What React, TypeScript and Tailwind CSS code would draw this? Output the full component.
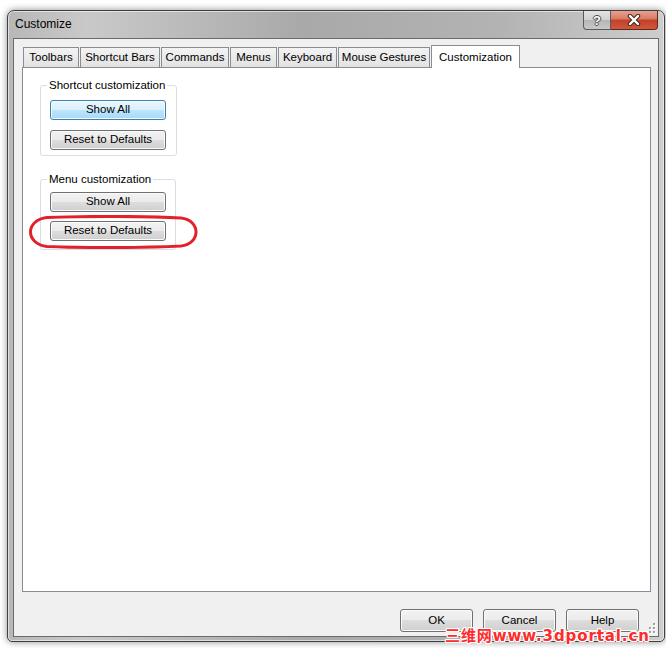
import React from "react";

const font = { fontFamily: '"Liberation Sans", Arial, sans-serif' };

const tabs = [
  { label: "Toolbars", w: "w-[56px]" },
  { label: "Shortcut Bars", w: "w-[80px]" },
  { label: "Commands", w: "w-[68px]" },
  { label: "Menus", w: "w-[47px]" },
  { label: "Keyboard", w: "w-[59px]" },
  { label: "Mouse Gestures", w: "w-[92px]" },
];

// classic Win7 push button
const Btn = ({
  label,
  size,
  hot = false,
}: {
  label: string;
  size: string;
  hot?: boolean;
}) => (
  <div
    className={
      size +
      " flex items-center justify-center rounded-[3px] border text-[11.5px] text-black " +
      (hot
        ? "border-[#3c7fb1] bg-[linear-gradient(#eaf6fd_0%,#d9f0fc_50%,#bee6fd_50%,#a7d9f5_100%)] shadow-[inset_0_0_0_1px_#f4fbff]"
        : "border-[#707070] bg-[linear-gradient(#f2f2f2_0%,#ebebeb_50%,#dddddd_50%,#cfcfcf_100%)] shadow-[inset_0_0_0_1px_#fbfbfb]")
    }
  >
    {label}
  </div>
);

const App = () => {
  return (
    <div
      className="relative w-[666px] h-[648px] overflow-hidden bg-white pt-[10px] pl-[7px]"
      style={font}
    >
      {/* Window frame */}
      <div className="flex flex-col w-[658px] h-[632px] rounded-t-[7px] rounded-b-[5px] border border-[#3f3f3f] bg-[linear-gradient(90deg,#b7b7b7_0%,#c9c9c9_12%,#a9a9a9_45%,#b3b3b3_75%,#cdcdcd_100%)] shadow-[0_0_7px_rgba(0,0,0,0.45),inset_0_0_0_1px_rgba(255,255,255,0.55)] px-[5px] pb-[4px]">
        {/* Title bar */}
        <div className="flex h-[27px] shrink-0">
          <div className="self-center pl-[2px] pb-[1px] text-[12px] text-black">
            Customize
          </div>
          <div className="ml-auto mr-[1px] flex self-start">
            <div className="flex w-[28px] h-[19px] items-center justify-center rounded-bl-[4px] border border-t-0 border-[#5a5a5a] bg-[linear-gradient(#e4e4e4_0%,#d0d0d0_50%,#b5b5b5_50%,#c9c9c9_100%)]">
              <span className="text-[13px] font-bold leading-none text-white [text-shadow:1px_0_0_#4a4a4a,-1px_0_0_#4a4a4a,0_1px_0_#4a4a4a,0_-1px_0_#4a4a4a]">
                ?
              </span>
            </div>
            <div className="flex w-[47px] h-[19px] items-center justify-center rounded-br-[4px] border border-t-0 border-l-0 border-[#5a2a20] bg-[linear-gradient(#e7a190_0%,#d77a62_45%,#c2402a_50%,#d2583a_100%)]">
              <svg width="14" height="12" viewBox="0 0 14 12">
                <path d="M3 2 L11 10 M11 2 L3 10" stroke="#4a2a22" strokeWidth="4.5" strokeLinecap="round" />
                <path d="M3 2 L11 10 M11 2 L3 10" stroke="#ffffff" strokeWidth="2.4" strokeLinecap="round" />
              </svg>
            </div>
          </div>
        </div>

        {/* Client area */}
        <div className="relative flex flex-1 flex-col border border-[#6b6b6b] bg-[#f0f0f0] pl-[8px] pr-[7px]">
          {/* Tab strip */}
          <div className="mt-[6px] flex h-[22px] items-end gap-px pl-[1px]">
            {tabs.map((t) => (
              <div
                key={t.label}
                className={
                  t.w +
                  " flex h-[20px] items-center justify-center whitespace-nowrap border border-b-0 border-[#898c95] bg-[linear-gradient(#f3f3f3,#e2e2e2)] text-[11.5px] text-black"
                }
              >
                {t.label}
              </div>
            ))}
            <div className="relative z-10 -mb-px flex h-[23px] w-[89px] items-start justify-center border border-b-0 border-[#898c95] bg-white pt-[3px] text-[11.5px] text-black">
              Customization
            </div>
          </div>

          {/* Tab panel */}
          <div className="relative h-[525px] border border-[#898c95] bg-white pl-[17px]">
            <fieldset className="mt-[10px] w-[135px] rounded-[3px] border border-[#d5dfe5] px-[9px] pt-[7px] pb-[5px]">
              <legend className="-ml-[3px] whitespace-nowrap px-[2px] text-[11.5px] leading-[15px] text-black">
                Shortcut customization
              </legend>
              <div className="flex flex-col gap-[10px]">
                <Btn label="Show All" size="w-[116px] h-[20px]" hot />
                <Btn label="Reset to Defaults" size="w-[116px] h-[20px]" />
              </div>
            </fieldset>

            <fieldset className="mt-[16px] w-[135px] rounded-[3px] border border-[#d5dfe5] px-[9px] pt-[5px] pb-[8px]">
              <legend className="-ml-[3px] whitespace-nowrap px-[2px] text-[11.5px] leading-[15px] text-black">
                Menu customization
              </legend>
              <div className="flex flex-col gap-[9px]">
                <Btn label="Show All" size="w-[116px] h-[20px]" />
                <Btn label="Reset to Defaults" size="w-[116px] h-[20px]" />
              </div>
            </fieldset>

            {/* red marker drawn on the screenshot */}
            <svg
              className="absolute left-0 top-[147px]"
              width="178"
              height="34"
              viewBox="0 0 178 34"
            >
              <path
                d="M24 2.5 C 62 1, 126 1, 158 3 C 178 5, 178 29, 158 31 C 121 33, 62 33, 24 31.5 C 2 29, 2 5, 24 2.5 Z"
                fill="none"
                stroke="#e3212b"
                strokeWidth="3"
              />
            </svg>
          </div>

          {/* Dialog buttons */}
          <div className="mt-[17px] flex justify-end gap-[10px] pr-[12px]">
            <Btn label="OK" size="w-[73px] h-[23px]" />
            <Btn label="Cancel" size="w-[73px] h-[23px]" />
            <Btn label="Help" size="w-[73px] h-[23px]" />
          </div>

          {/* size grip */}
          <svg className="absolute right-[2px] bottom-[2px]" width="12" height="12" viewBox="0 0 12 12">
            {[
              [9, 1],
              [9, 5],
              [5, 5],
              [9, 9],
              [5, 9],
              [1, 9],
            ].map(([x, y], i) => (
              <g key={i}>
                <rect x={x + 1} y={y + 1} width="2" height="2" fill="#ffffff" />
                <rect x={x} y={y} width="2" height="2" fill="#a0a0a0" />
              </g>
            ))}
          </svg>
        </div>
      </div>

      {/* watermark */}
      <div
        className="absolute left-[445px] top-[628px] text-[15px] font-bold leading-[16px] tracking-[0.9px] text-[#ff2a2a] [text-shadow:1px_0_0_#fff,-1px_0_0_#fff,0_1px_0_#fff,0_-1px_0_#fff,1px_1px_0_#fff,-1px_-1px_0_#fff,1px_-1px_0_#fff,-1px_1px_0_#fff]"
        style={{ fontFamily: '"DejaVu Sans", "Noto Sans CJK SC", sans-serif' }}
      >
        三维网www.3dportal.cn
      </div>
    </div>
  );
};

export default App;
